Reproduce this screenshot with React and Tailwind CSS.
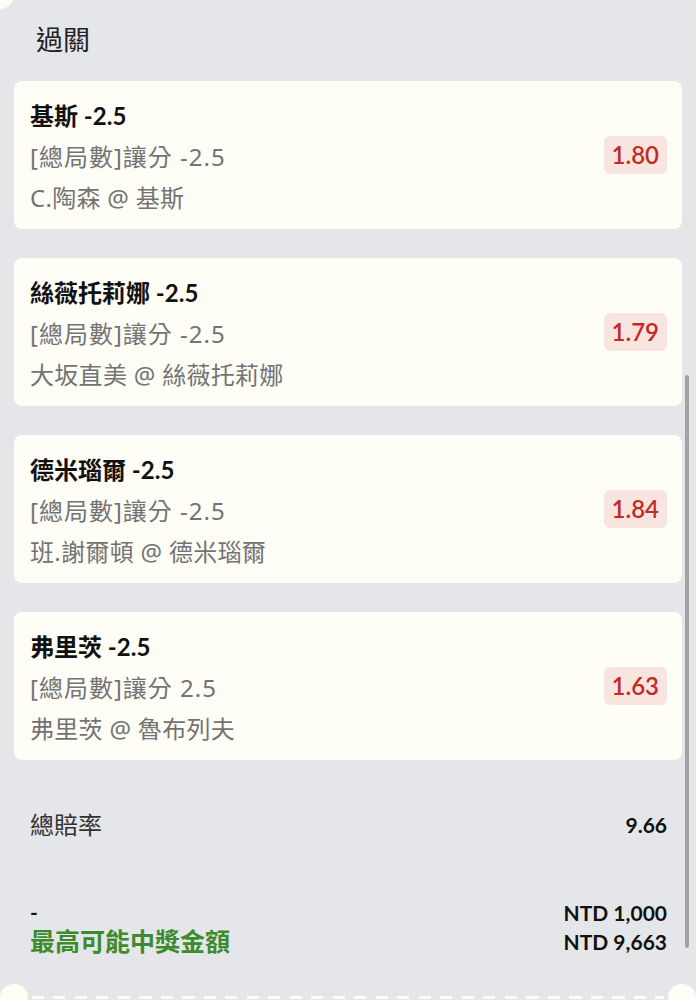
const legs = [
  { title: '基斯 -2.5', market: '[總局數]讓分 -2.5', match: 'C.陶森 @ 基斯', odds: '1.80' },
  { title: '絲薇托莉娜 -2.5', market: '[總局數]讓分 -2.5', match: '大坂直美 @ 絲薇托莉娜', odds: '1.79' },
  { title: '德米瑙爾 -2.5', market: '[總局數]讓分 -2.5', match: '班.謝爾頓 @ 德米瑙爾', odds: '1.84' },
  { title: '弗里茨 -2.5', market: '[總局數]讓分 2.5', match: '弗里茨 @ 魯布列夫', odds: '1.63' }
];

const latin = "font-['Lato','Noto_Sans_CJK_TC',sans-serif]";
const cjk = "font-['Noto_Sans','Noto_Sans_CJK_TC',sans-serif]";

function LegCard({ leg }) {
  return (
    <div className="mx-[14px] flex h-[148px] items-center justify-between rounded-lg bg-[#fffef6] pl-4 pr-[15px]">
      <div className="pt-[2px] leading-[41px]">
        <div className={`${latin} text-[24px] font-bold text-[#111]`}>{leg.title}</div>
        <div className={`${cjk} text-[24px] tracking-[1px] text-[#737373]`}>{leg.market}</div>
        <div className={`${cjk} text-[24px] tracking-[0.3px] text-[#737373]`}>{leg.match}</div>
      </div>
      <span className={`${latin} rounded-md bg-[#f9e5df] px-2 py-[3px] text-[24px] font-semibold leading-8 text-[#c22a26]`}>
        {leg.odds}
      </span>
    </div>
  );
}

export default function App() {
  return (
    <div className="relative h-[1000px] w-[696px] overflow-hidden bg-[#e5e6e9]">
      <div className="absolute -left-[14px] -top-[19px] h-[28px] w-[28px] rounded-full bg-[#fffef6]" />

      <h1 className={`${cjk} pl-[36px] pt-[22px] text-[27px] leading-[36px] text-[#222]`}>過關</h1>

      <div className="mt-[23px] flex flex-col gap-[29px]">
        {legs.map((leg) => (
          <LegCard key={leg.odds} leg={leg} />
        ))}
      </div>

      <div className="mt-[49px] flex items-center justify-between pl-[30px] pr-[29px]">
        <span className={`${cjk} text-[24px] leading-[30px] text-[#333]`}>總賠率</span>
        <span className={`${latin} text-[21px] font-bold text-[#111]`}>9.66</span>
      </div>

      <div className="mt-[56px] flex items-end justify-between pl-[30px] pr-[29px]">
        <div className="flex flex-col">
          <span className={`${latin} text-[21px] font-bold leading-[29px] text-[#111]`}>-</span>
          <span className={`${cjk} text-[25px] font-bold leading-[30px] text-[#3d8b2c]`}>最高可能中獎金額</span>
        </div>
        <div className={`${latin} flex flex-col items-end text-[21px] font-bold leading-[29px] text-[#111]`}>
          <span>NTD 1,000</span>
          <span>NTD 9,663</span>
        </div>
      </div>

      <div className="mt-[28px] flex h-[28px] items-center gap-1">
        <div className="h-[28px] w-[28px] shrink-0 rounded-full bg-[#fffef6]" />
        <div className="h-[3px] flex-1 bg-[repeating-linear-gradient(90deg,#fffef6_0_12px,transparent_12px_21.5px)]" />
        <div className="h-[28px] w-[28px] shrink-0 rounded-full bg-[#fffef6]" />
      </div>

      <div className="absolute left-[685px] top-[375px] h-[573px] w-[4px] rounded-full bg-[#a3a3a6]" />
    </div>
  );
}
